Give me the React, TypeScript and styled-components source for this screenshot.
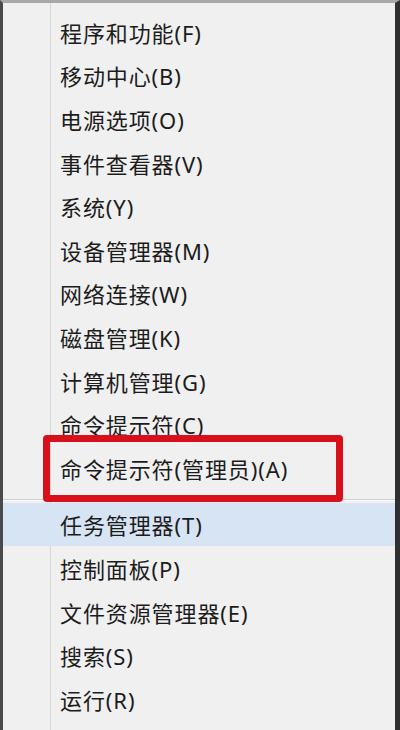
import React from "react";
import styled, { createGlobalStyle } from "styled-components";

const GlobalStyle = createGlobalStyle`
  html, body {
    margin: 0;
    padding: 0;
    background: #f0f0f0;
  }
  body {
    font-family: "Noto Sans", "Noto Sans CJK SC", sans-serif;
  }
`;

const Menu = styled.div`
  position: relative;
  width: 400px;
  height: 730px;
  box-sizing: border-box;
  overflow: hidden;
  background: #f0f0f0;
  border-top: 3px solid #a9a9a9;
  border-left: 3px solid #4a4a4a;
  border-right: 5px solid #303030;
  padding-top: 7px;
`;

const Gutter = styled.div`
  position: absolute;
  top: 0;
  bottom: 0;
  left: 47px;
  width: 1px;
  background: #d6d6d6;
`;

const Group = styled.ul`
  list-style: none;
  margin: 0;
  padding: 0;
`;

const Item = styled.li<{ $active?: boolean }>`
  position: relative;
  display: flex;
  align-items: center;
  height: 43.6px;
  padding-left: 57px;
  font-size: 22px;
  letter-spacing: 0.9px;
  color: #1c1c1c;
  background: ${(p) => (p.$active ? "#d6e4f4" : "transparent")};
`;

const Separator = styled.li`
  height: 1px;
  margin: 9px 0 2px;
  background: #cfcfcf;
  border-bottom: 1px solid #fbfbfb;
`;

const Callout = styled.span`
  position: absolute;
  left: 40px;
  top: -11px;
  width: 300px;
  height: 67px;
  box-sizing: border-box;
  border: 7px solid #d8101c;
  border-radius: 4px;
  pointer-events: none;
`;

const upper = [
  "程序和功能(F)",
  "移动中心(B)",
  "电源选项(O)",
  "事件查看器(V)",
  "系统(Y)",
  "设备管理器(M)",
  "网络连接(W)",
  "磁盘管理(K)",
  "计算机管理(G)",
  "命令提示符(C)",
];

const lower = [
  "任务管理器(T)",
  "控制面板(P)",
  "文件资源管理器(E)",
  "搜索(S)",
  "运行(R)",
];

export default function App() {
  return (
    <>
      <GlobalStyle />
      <Menu>
        <Gutter />
        <Group>
          {upper.map((label) => (
            <Item key={label}>{label}</Item>
          ))}
          <Item>
            命令提示符(管理员)(A)
            <Callout />
          </Item>
          <Separator />
          {lower.map((label, i) => (
            <Item key={label} $active={i === 0}>
              {label}
            </Item>
          ))}
        </Group>
      </Menu>
    </>
  );
}
